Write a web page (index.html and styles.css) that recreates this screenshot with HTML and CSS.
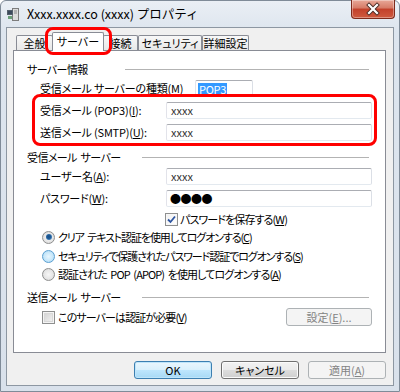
FILE: index.html
```html
<!DOCTYPE html>
<html lang="ja">
<head>
<meta charset="utf-8">
<title>プロパティ</title>
<link rel="stylesheet" href="styles.css">
</head>
<body>
<div class="window">
  <div class="titlebar">
    <svg class="appicon" viewBox="0 0 13 13" width="13" height="13">
      <rect x="5.5" y="0.5" width="6" height="12" fill="#dcdcdc" stroke="#7d7d7d"/>
      <line x1="7" y1="3" x2="10" y2="3" stroke="#8a8a8a"/>
      <line x1="7" y1="5" x2="10" y2="5" stroke="#8a8a8a"/>
      <rect x="0.5" y="2.5" width="5" height="4" fill="#3c4a5c" stroke="#55606c"/>
      <rect x="1" y="8" width="4" height="3" fill="#6b9f78"/>
    </svg>
    <span class="title">Xxxx.xxxx.co (xxxx) プロパティ</span>
    <div class="close">
      <svg viewBox="0 0 44 18" width="44" height="18">
        <path d="M18 5 L26 13 M26 5 L18 13" stroke="#4b2b25" stroke-width="4" stroke-linecap="square"/>
        <path d="M18 5 L26 13 M26 5 L18 13" stroke="#ffffff" stroke-width="2.2" stroke-linecap="square"/>
      </svg>
    </div>
  </div>

  <div class="client">
    <div class="tabs">
      <div class="tab tab-general">全般</div>
      <div class="tab tab-server active">サーバー</div>
      <div class="tab tab-conn">接続</div>
      <div class="tab tab-sec">セキュリティ</div>
      <div class="tab tab-adv">詳細設定</div>
    </div>

    <div class="panel">
      <div class="group-head"><span>サーバー情報</span><i class="rule"></i></div>
      <div class="row">
        <span class="label label-wide">受信メール サーバーの種類(<u>M</u>)</span>
        <div class="field field-short"><span class="sel">POP3</span></div>
      </div>

      <div class="highlight">
        <div class="row row-in">
          <span class="label">受信メール (POP3)(<u>I</u>):</span>
          <div class="field">xxxx</div>
        </div>
        <div class="row row-in row-gap">
          <span class="label">送信メール (SMTP)(<u>U</u>):</span>
          <div class="field">xxxx</div>
        </div>
      </div>

      <div class="group-head group-head-2"><span>受信メール サーバー</span><i class="rule rule-short"></i></div>
      <div class="row row-user">
        <span class="label">ユーザー名(<u>A</u>):</span>
        <div class="field">xxxx</div>
      </div>
      <div class="row row-pass">
        <span class="label">パスワード(<u>W</u>):</span>
        <div class="field field-dots">●●●●</div>
      </div>
      <div class="opt opt-save">
        <span class="check">
          <svg viewBox="0 0 11 11" width="11" height="11"><path d="M2 5.5 L4.5 8 L9 2.5" fill="none" stroke="#2c54a0" stroke-width="1.8"/></svg>
        </span>
        <span class="opt-text">パスワードを保存する(<u>W</u>)</span>
      </div>
      <div class="opt opt-r1">
        <span class="radio checked"></span>
        <span class="opt-text opt-tight">クリア テキスト認証を使用してログオンする(<u>C</u>)</span>
      </div>
      <div class="opt opt-r2">
        <span class="radio hot"></span>
        <span class="opt-text opt-tight">セキュリティで保護されたパスワード認証でログオンする(<u>S</u>)</span>
      </div>
      <div class="opt opt-r3">
        <span class="radio"></span>
        <span class="opt-text">認証された POP (APOP) を使用してログオンする(<u>A</u>)</span>
      </div>

      <div class="group-head group-head-3"><span>送信メール サーバー</span><i class="rule rule-short"></i></div>
      <div class="auth-row">
        <div class="opt-inline">
          <span class="check check-off"></span>
          <span class="opt-text">このサーバーは認証が必要(<u>V</u>)</span>
        </div>
        <div class="btn btn-disabled btn-settings">設定(<u>E</u>)...</div>
      </div>
    </div>

    <div class="buttons">
      <div class="btn btn-default">OK</div>
      <div class="btn">キャンセル</div>
      <div class="btn btn-disabled">適用(<u>A</u>)</div>
    </div>
  </div>
</div>
</body>
</html>
```

FILE: styles.css
```css
* { box-sizing: border-box; }
html, body { margin: 0; padding: 0; }
body {
  width: 400px;
  height: 392px;
  overflow: hidden;
  background: #ffffff;
  font-family: "Noto Sans CJK JP", "Noto Sans", sans-serif;
  font-size: 11px;
  font-feature-settings: "palt" 1;
  color: #000;
}
u { text-decoration: underline; text-underline-offset: 1px; }

.window {
  width: 400px;
  height: 392px;
  border: 1px solid #7f8b98;
  border-radius: 6px 6px 0 0;
  background: linear-gradient(#eaeff5, #dde5ee 30px, #d9e1eb);
  display: flex;
  flex-direction: column;
}

.titlebar {
  height: 26px;
  flex: none;
  display: flex;
  align-items: center;
  padding-left: 6px;
}
.appicon { flex: none; display: block; }
.title {
  margin-left: 7px;
  font-size: 12.5px;
  line-height: 14px;
  font-feature-settings: normal;
  white-space: nowrap;
  color: #000;
}
.close {
  margin-left: auto;
  margin-right: 4px;
  margin-top: -1px;
  align-self: flex-start;
  width: 44px;
  height: 19px;
  border: 1px solid #7e2a1b;
  border-top: none;
  border-radius: 0 0 4px 4px;
  background: linear-gradient(#e8a898, #d67a66 45%, #c2402a 50%, #cf5a3f 100%);
  box-shadow: inset 0 0 0 1px rgba(255,255,255,0.35);
  overflow: hidden;
}
.close svg { display: block; margin: 0 -1px; }

.client {
  margin: 0 5px;
  height: 359px;
  flex: none;
  border: 1px solid #8d97a2;
  background: #f0f0f0;
  padding-top: 4px;
}

.tabs {
  height: 18px;
  display: flex;
  align-items: flex-end;
  padding-left: 9px;
}
.tab {
  height: 15px;
  border: 1px solid #898c95;
  border-bottom: none;
  background: linear-gradient(#f8f8f8, #e8e8e8);
  text-align: center;
  line-height: 14px;
  white-space: nowrap;
  border-radius: 2px 2px 0 0;
}
.tab-general { width: 37px; }
.tab-server { width: 52px; }
.tab-conn { width: 35px; }
.tab-sec { width: 64px; }
.tab-adv { width: 47px; }
.tab.active {
  height: 19px;
  margin: 0 -1px -1px -1px;
  background: #ffffff;
  line-height: 16px;
  position: relative;
  z-index: 1;
}
.tab.active::after {
  content: "";
  position: absolute;
  left: -8px;
  right: -9px;
  top: -6px;
  bottom: -4px;
  border: 3px solid #ff0000;
  border-radius: 8px;
}

.panel {
  margin-left: 6px;
  width: 373px;
  height: 303px;
  border: 1px solid #898c95;
  background: #ffffff;
  padding: 10px 0 0 13px;
}

.group-head {
  width: 342px;
  height: 16px;
  display: flex;
  align-items: center;
  line-height: 16px;
  white-space: nowrap;
  letter-spacing: -0.6px;
  word-spacing: 2px;
}
.rule {
  margin-left: auto;
  width: 244px;
  height: 1px;
  background: #b3b3b3;
}
.rule-short { width: 227px; }
.group-head-2 { margin-top: 3px; }
.group-head-3 { margin-top: 7px; }

.row {
  display: flex;
  align-items: center;
  height: 17px;
  margin-top: 3px;
  margin-left: 13px;
}
.label {
  width: 126px;
  flex: none;
  white-space: nowrap;
  line-height: 17px;
  letter-spacing: -0.2px;
}
.label-wide { width: 155px; }
.field {
  width: 206px;
  height: 17px;
  flex: none;
  border: 1px solid;
  border-color: #abadb3 #dbdfe6 #e3e9ef #e2e3ea;
  border-radius: 2px;
  background: #ffffff;
  padding-left: 4px;
  line-height: 15px;
  color: #333;
  white-space: nowrap;
}
.field-short { width: 58px; padding-left: 2px; }
.sel {
  display: inline-block;
  background: #3399ff;
  color: #ffffff;
  line-height: 12px;
  padding: 0 1px;
  vertical-align: middle;
  margin-top: -2px;
  letter-spacing: -0.3px;
}
.field-dots { letter-spacing: -0.5px; font-feature-settings: normal; color: #000; padding-left: 3px; }

.highlight {
  position: relative;
  width: 345px;
  margin-left: 5px;
  margin-top: -3px;
  border: 3px solid #ff0000;
  border-radius: 8px;
  padding: 5px 2px 2px 5px;
}
.row-in { margin: 0; }
.row-in.row-gap { margin-top: 5px; }
.row-user { margin-top: 3px; }
.row-pass { margin-top: 5px; }

.opt {
  display: flex;
  align-items: center;
  gap: 3px;
  white-space: nowrap;
  line-height: 16px;
}
.opt-text { letter-spacing: -0.9px; word-spacing: 2px; }
.opt-tight { letter-spacing: -1.1px; }
.opt-save { height: 14px; margin-top: 5px; margin-left: 138px; gap: 2px; }
.opt-r1 { height: 16px; margin-top: 3px; margin-left: 15px; }
.opt-r2 { height: 16px; margin-top: 3px; margin-left: 15px; }
.opt-r3 { height: 16px; margin-top: 2px; margin-left: 15px; }

.check {
  width: 13px;
  height: 13px;
  flex: none;
  border: 1px solid #8e8f8f;
  background: linear-gradient(135deg, #f0f0f0, #ffffff);
  box-shadow: inset 0 0 0 1px #f7f7f7;
  display: flex;
  align-items: center;
  justify-content: center;
}
.check svg { display: block; }
.check-off {
  background: linear-gradient(135deg, #cfcfcf, #f6f6f6);
  box-shadow: inset 0 0 0 1px #f4f4f4, inset 0 0 0 2px #d8d8d8;
}

.radio {
  width: 13px;
  height: 13px;
  flex: none;
  border-radius: 50%;
  border: 1px solid #8e8f8f;
  background: radial-gradient(circle at 50% 50%, #f6f6f6 0, #e6e6e6 55%, #cfcfcf 100%);
  position: relative;
}
.radio.checked::after {
  content: "";
  position: absolute;
  left: 2.5px;
  top: 2.5px;
  width: 6px;
  height: 6px;
  border-radius: 50%;
  background: radial-gradient(circle at 45% 45%, #1a4f84 0, #1c5a98 40%, #6fa9da 100%);
}
.radio.hot {
  border-color: #5b9fd0;
  background: radial-gradient(circle at 50% 50%, #e8f6fe 0, #c7e7fa 55%, #9fd3f3 100%);
}

.auth-row {
  height: 18px;
  margin-top: 3px;
  margin-left: 15px;
  width: 330px;
  display: flex;
  align-items: center;
  justify-content: space-between;
}
.opt-inline {
  display: flex;
  align-items: center;
  gap: 3px;
  white-space: nowrap;
  line-height: 16px;
}

.btn {
  width: 78px;
  height: 18px;
  border: 1px solid #707070;
  border-radius: 3px;
  background: linear-gradient(#f2f2f2, #ebebeb 50%, #dddddd 50%, #cfcfcf);
  box-shadow: inset 0 0 0 1px #fbfbfb;
  text-align: center;
  line-height: 16px;
  white-space: nowrap;
}
.btn-default {
  border-color: #3c7fb1;
  background: linear-gradient(#eaf6fd, #d9f0fc 50%, #bee6fd 50%, #a7d9f5);
  box-shadow: inset 0 0 0 1px #bfe5fa;
}
.btn-disabled {
  border-color: #adb2b5;
  background: #f4f4f4;
  box-shadow: none;
  color: #838383;
}
.btn-settings { width: 86px; }

.buttons {
  margin-top: 8px;
  display: flex;
  justify-content: flex-end;
  gap: 9px;
  padding-right: 7px;
}
```
